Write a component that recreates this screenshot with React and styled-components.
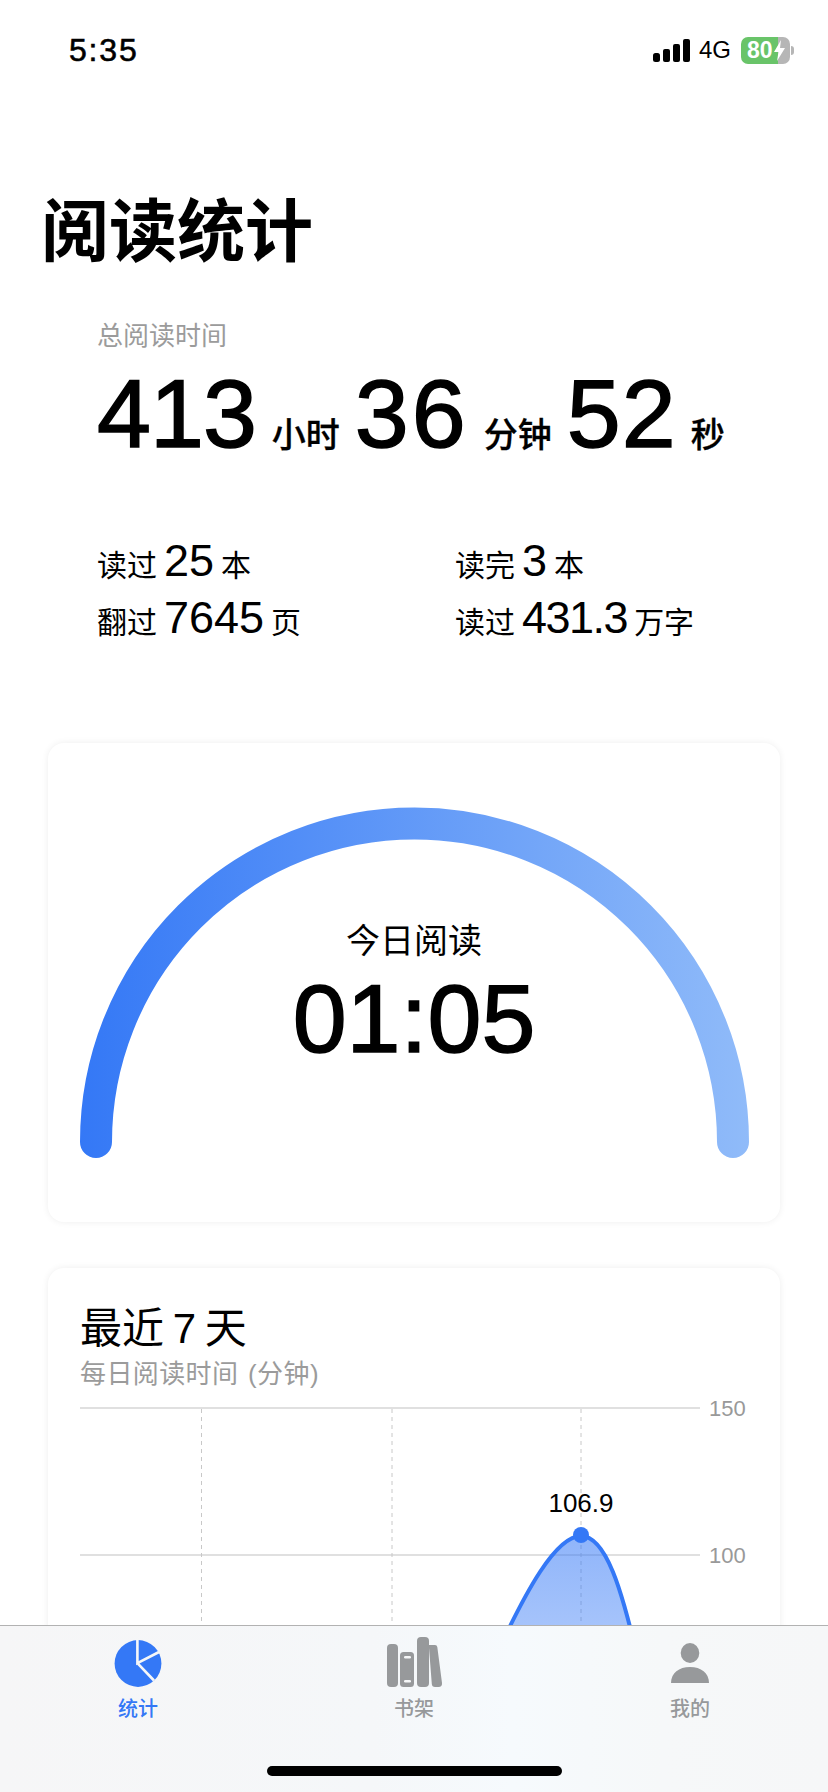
import React from 'react';
import styled, { createGlobalStyle } from 'styled-components';

const GlobalStyle = createGlobalStyle`
  html, body {
    margin: 0;
    padding: 0;
    background: #fff;
  }
  body {
    font-family: "Liberation Sans", "Noto Sans CJK SC", sans-serif;
    color: #000;
  }
`;

const Screen = styled.div`
  position: relative;
  width: 828px;
  height: 1792px;
  overflow: hidden;
  background: #fff;
`;

const StatusBar = styled.div`
  height: 100px;
  display: flex;
  align-items: center;
  justify-content: space-between;
  padding: 0 34px 0 69px;
  box-sizing: border-box;
`;

const Time = styled.span`
  font-size: 32px;
  font-weight: 400;
  -webkit-text-stroke: 0.6px #000;
  letter-spacing: 1.8px;
`;

const StatusRight = styled.div`
  display: flex;
  align-items: center;
`;

const Network = styled.span`
  font-size: 24px;
  margin: 0 10px 0 9px;
`;

const Battery = styled.div`
  width: 49px;
  height: 27px;
  border-radius: 7px;
  overflow: hidden;
  background: linear-gradient(90deg, #69c469 0, #69c469 76%, #b6b6b6 76%, #b6b6b6 100%);
  display: flex;
  align-items: center;
  padding-left: 6px;
  box-sizing: border-box;
  color: #fff;
  font-size: 23px;
  font-weight: 700;
`;

const BatteryNub = styled.div`
  width: 3px;
  height: 9px;
  margin-left: 1px;
  border-radius: 0 4px 4px 0;
  background: #b6b6b6;
`;

const Title = styled.h1`
  margin: 92px 0 0;
  padding-left: 41px;
  font-size: 68px;
  line-height: 80px;
  font-weight: 700;
`;

const Summary = styled.section`
  margin-top: 46px;
  padding-left: 97px;
`;

const Caption = styled.div`
  font-size: 26px;
  line-height: 36px;
  color: #9b9b9b;
`;

const TotalRow = styled.div`
  margin-top: 10px;
  height: 100px;
  line-height: 100px;
  white-space: nowrap;
`;

const BigNumber = styled.span`
  font-size: 97px;
  -webkit-text-stroke: 1.5px #000;
  letter-spacing: ${props => props.$spacing}px;
`;

const BigUnit = styled.span`
  font-size: 34px;
  font-weight: 500;
  -webkit-text-stroke: 0.3px #000;
  margin-left: ${props => props.$left}px;
  margin-right: ${props => props.$right}px;
`;

const StatsGrid = styled.div`
  margin-top: 68px;
  display: grid;
  grid-template-columns: 358px 1fr;
  grid-auto-rows: 57px;
`;

const Stat = styled.div`
  font-size: 30px;
  line-height: 57px;
  white-space: nowrap;
`;

const StatNumber = styled.span`
  font-size: 45px;
  margin: 0 7px;
  letter-spacing: ${props => (props.$tight ? '-1.5px' : '0')};
`;

const Card = styled.section`
  position: relative;
  margin: 0 48px;
  background: #fff;
  border-radius: 16px;
  box-shadow: 0 0 7px rgba(0, 0, 0, 0.07);
`;

const GaugeCard = styled(Card)`
  margin-top: 97px;
  height: 479px;
`;

const Gauge = styled.svg`
  display: block;
`;

const GaugeText = styled.div`
  position: absolute;
  left: 0;
  right: 0;
  top: 175px;
  text-align: center;
`;

const GaugeLabel = styled.div`
  font-size: 34px;
  line-height: 46px;
`;

const GaugeValue = styled.div`
  font-size: 97px;
  line-height: 96px;
  margin-top: 7px;
  -webkit-text-stroke: 1.5px #000;
`;

const ChartCard = styled(Card)`
  margin-top: 46px;
  height: 520px;
  padding: 36px 0 0 32px;
  box-sizing: border-box;
`;

const ChartTitle = styled.h2`
  margin: 0;
  font-size: 42px;
  line-height: 50px;
  font-weight: 400;
  word-spacing: -3px;
`;

const ChartSubtitle = styled.div`
  margin-top: 2px;
  font-size: 26px;
  line-height: 36px;
  color: #9b9b9b;
  letter-spacing: 0.4px;
  word-spacing: 2px;
`;

const Chart = styled.svg`
  display: block;
  margin-top: 4px;
  font-family: "Liberation Sans", sans-serif;
`;

const TabBar = styled.nav`
  position: absolute;
  left: 0;
  right: 0;
  bottom: 0;
  height: 167px;
  box-sizing: border-box;
  border-top: 1px solid #b2b2b2;
  background: linear-gradient(90deg, #f6f6f7 0, #f5f7f9 45%, #f6fafd 62%, #f6f8f9 80%, #f6f7f8 100%);
  display: grid;
  grid-template-columns: repeat(3, 1fr);
  align-items: start;
`;

const Tab = styled.div`
  display: flex;
  flex-direction: column;
  align-items: center;
  height: 100px;
  padding-top: 10px;
  color: ${props => (props.$active ? '#3478f6' : '#97999b')};
`;

const TabIcon = styled.svg`
  display: block;
  flex: none;
`;

const TabLabel = styled.span`
  margin-top: 8px;
  font-size: 20px;
  line-height: 26px;
  font-weight: 500;
`;

const HomeIndicator = styled.div`
  position: absolute;
  left: 267px;
  bottom: 16px;
  width: 295px;
  height: 10px;
  border-radius: 5px;
  background: #000;
`;

const SignalIcon = () => (
  <svg width="37" height="24" viewBox="0 0 37 24">
    <rect x="0" y="15" width="7" height="9" rx="2.5" fill="#000" />
    <rect x="10" y="11" width="7" height="13" rx="2" fill="#000" />
    <rect x="20" y="6" width="7" height="18" rx="2" fill="#000" />
    <rect x="30" y="1" width="7" height="23" rx="2" fill="#000" />
  </svg>
);

const PieIcon = () => (
  <TabIcon width="48" height="52" viewBox="0 0 48 52">
    <circle cx="24" cy="27.5" r="23.4" fill="currentColor" />
    <path d="M23.4 3 V27.2 L45 16 M23.4 27.2 L40 44.5" fill="none" stroke="#f6f7f8" strokeWidth="2.6" />
  </TabIcon>
);

const ShelfIcon = () => (
  <TabIcon width="58" height="52" viewBox="0 0 58 52">
    <rect x="2" y="8" width="11" height="43" rx="4" fill="currentColor" />
    <rect x="15" y="16" width="14" height="35" rx="3.5" fill="currentColor" />
    <rect x="19" y="20" width="7" height="2.6" rx="1.3" fill="#f6f7f8" />
    <rect x="19" y="44" width="7" height="2.6" rx="1.3" fill="#f6f7f8" />
    <rect x="32" y="1" width="12" height="50" rx="4" fill="currentColor" />
    <path d="M44 9 L50 9 Q52 9 52.3 11 L57 47 Q57.3 51 53.5 51 L50 51 Q47 51 46.8 48 L44 12 Z" fill="currentColor" />
  </TabIcon>
);

const PersonIcon = () => (
  <TabIcon width="40" height="52" viewBox="0 0 40 52">
    <ellipse cx="20" cy="17" rx="9.3" ry="10" fill="currentColor" />
    <path d="M1 47 C1 37 9 31 20 31 C31 31 39 37 39 47 Z" fill="currentColor" />
  </TabIcon>
);

// value, unit, letter spacing of the value, margins of the unit
const totals = [
  ['413', '小时', -1, 16, 15],
  ['36', '分钟', 3, 15, 15],
  ['52', '秒', 1, 14, 0],
];

const stats = [
  ['读过', '25', '本'],
  ['读完', '3', '本'],
  ['翻过', '7645', '页'],
  ['读过', '431.3', '万字'],
];

const gridX = [121.5, 312, 501];

export default function App() {
  return (
    <Screen>
      <GlobalStyle />
      <StatusBar>
        <Time>5:35</Time>
        <StatusRight>
          <SignalIcon />
          <Network>4G</Network>
          <Battery>
            80
            <svg width="13" height="21" viewBox="0 0 13 21">
              <path d="M8 0 L1 12 H5.5 L4 21 L12 8 H7 Z" fill="#fff" />
            </svg>
          </Battery>
          <BatteryNub />
        </StatusRight>
      </StatusBar>

      <Title>阅读统计</Title>

      <Summary>
        <Caption>总阅读时间</Caption>
        <TotalRow>
          {totals.map(([value, unit, spacing, left, right]) => (
            <React.Fragment key={unit}>
              <BigNumber $spacing={spacing}>{value}</BigNumber>
              <BigUnit $left={left} $right={right}>{unit}</BigUnit>
            </React.Fragment>
          ))}
        </TotalRow>
        <StatsGrid>
          {stats.map(([label, value, unit]) => (
            <Stat key={label + value}>
              {label}
              <StatNumber $tight={value.includes('.')}>{value}</StatNumber>
              {unit}
            </Stat>
          ))}
        </StatsGrid>
      </Summary>

      <GaugeCard>
        <Gauge width="732" height="479" viewBox="0 0 732 479">
          <defs>
            <linearGradient id="arcGradient" gradientUnits="userSpaceOnUse" x1="32" y1="0" x2="701" y2="0">
              <stop offset="0" stopColor="#3478f6" />
              <stop offset="1" stopColor="#90bbf9" />
            </linearGradient>
          </defs>
          <path
            d="M48 399 A318.5 318.5 0 0 1 685 399"
            fill="none"
            stroke="url(#arcGradient)"
            strokeWidth="32"
            strokeLinecap="round"
          />
        </Gauge>
        <GaugeText>
          <GaugeLabel>今日阅读</GaugeLabel>
          <GaugeValue>01:05</GaugeValue>
        </GaugeText>
      </GaugeCard>

      <ChartCard>
        <ChartTitle>最近 7 天</ChartTitle>
        <ChartSubtitle>每日阅读时间 (分钟)</ChartSubtitle>
        <Chart width="670" height="260" viewBox="0 -4 670 260">
          <defs>
            <linearGradient id="areaGradient" x1="0" y1="0" x2="0" y2="1">
              <stop offset="0" stopColor="#3478f6" stopOpacity="0.55" />
              <stop offset="1" stopColor="#3478f6" stopOpacity="0.4" />
            </linearGradient>
          </defs>
          <line x1="0" y1="8" x2="620" y2="8" stroke="#e0e0e0" strokeWidth="2" />
          <line x1="0" y1="155" x2="620" y2="155" stroke="#e0e0e0" strokeWidth="2" />
          {gridX.map(x => (
            <line key={x} x1={x} y1="9" x2={x} y2="256" stroke="#c8c8c8" strokeWidth="1" strokeDasharray="4 4" />
          ))}
          <path d="M414 260 C446 190 476 136 501 136 C526 136 542 190 558 260 Z" fill="url(#areaGradient)" />
          <path d="M414 260 C446 190 476 136 501 136 C526 136 542 190 558 260" fill="none" stroke="#3478f6" strokeWidth="4" />
          <circle cx="501" cy="135" r="8" fill="#3478f6" />
          <text x="501" y="112" textAnchor="middle" fontSize="26" fill="#000">106.9</text>
          <text x="629" y="16" fontSize="22" fill="#999">150</text>
          <text x="629" y="163" fontSize="22" fill="#999">100</text>
        </Chart>
      </ChartCard>

      <TabBar>
        <Tab $active>
          <PieIcon />
          <TabLabel>统计</TabLabel>
        </Tab>
        <Tab>
          <ShelfIcon />
          <TabLabel>书架</TabLabel>
        </Tab>
        <Tab>
          <PersonIcon />
          <TabLabel>我的</TabLabel>
        </Tab>
      </TabBar>
      <HomeIndicator />
    </Screen>
  );
}
